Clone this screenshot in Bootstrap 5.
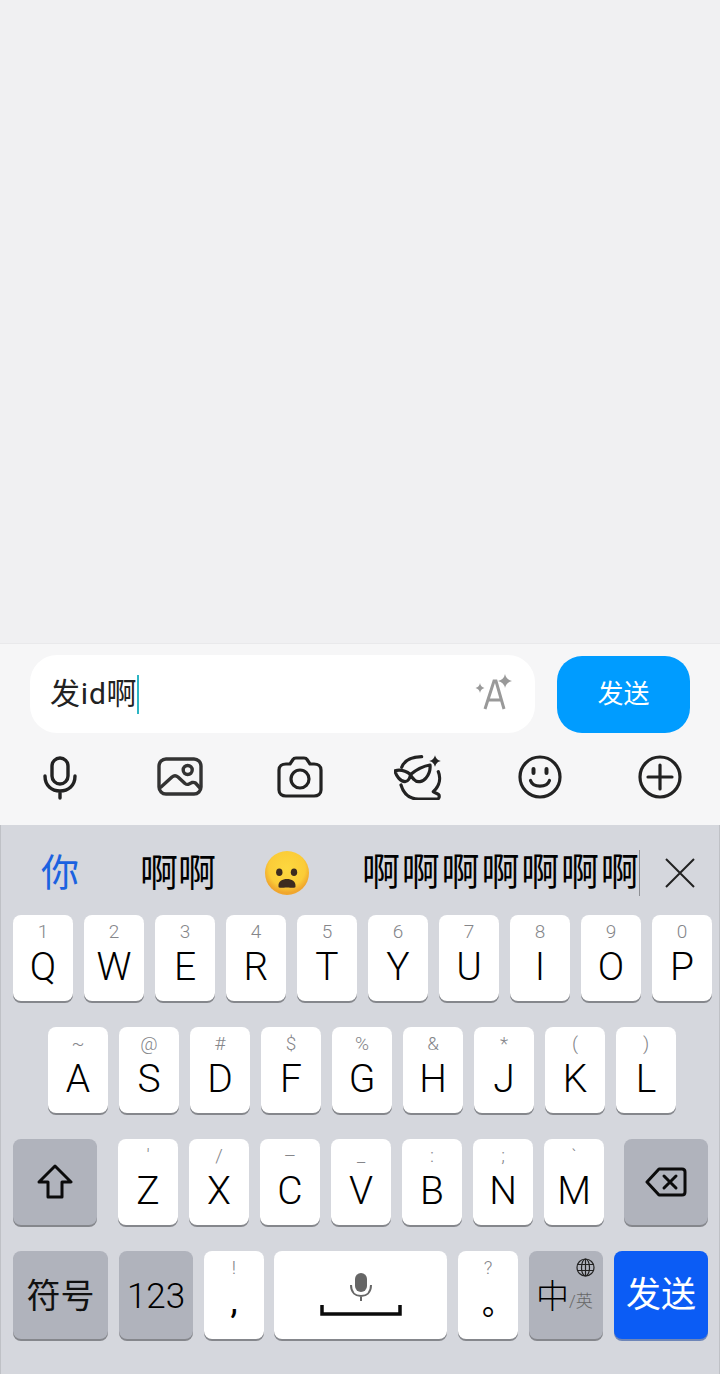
<!DOCTYPE html>
<html lang="zh-CN">
<head>
    <meta charset="UTF-8">
    <meta name="viewport" content="width=device-width, initial-scale=1.0">
    <title>发送消息</title>
    <!-- Bootstrap CSS -->
    <link href="https://cdn.jsdelivr.net/npm/bootstrap@5.3.0/dist/css/bootstrap.min.css" rel="stylesheet">
    <style>
        body {
            font-family: Roboto, "Noto Sans CJK SC", sans-serif;
            background: #f0f0f2;
            color: #111;
            overflow: hidden;
        }

        .chat-area { height: 643px; }

        /* input bar */
        .input-bar {
            height: 182px;
            background: #f6f6f7;
            border-top: 1px solid #e9e9eb;
        }
        .input-row { padding: 11px 30px 0; gap: 22px; }
        .msg-box {
            width: 505px;
            height: 78px;
            background: #fff;
            border-radius: 27px;
            padding: 0 21px 0 20px;
        }
        .msg-text { font-size: 30px; line-height: 40px; color: #222; letter-spacing: .8px; }
        .msg-caret { width: 2px; height: 39px; background: #2cb5c4; }
        .send-small {
            width: 133px;
            height: 77px;
            margin-top: 1px;
            background: #009cff;
            border-radius: 25px;
            color: #fff;
            font-size: 26px;
        }
        .tool-row { height: 88px; }
        .tool-row svg { display: block; margin: 0 auto; }

        /* keyboard */
        .keyboard {
            height: 549px;
            background: #d5d7dd;
            border-left: 1px solid #bfc1c6;
            border-right: 1px solid #bfc1c6;
        }
        .cand-row { height: 90px; padding-top: 6px; }
        .cand { font-size: 38px; line-height: 44px; color: #000; white-space: nowrap; }
        .cand-first { color: #1b62e0; width: 139px; padding-left: 40px; }
        .cand-two { width: 124px; }
        .cand-emoji { width: 98px; }
        .cand-long { width: 278px; letter-spacing: 1.8px; border-right: 1px solid #8d8f94; height: 46px; }
        .cand-close { margin-left: 24px; }

        .key-row { gap: 11px; margin-bottom: 26px; }
        .row-a { padding-left: 12px; }
        .row-b { padding-left: 47px; }
        .key-cap {
            width: 60px;
            height: 86px;
            background: #fff;
            border-radius: 8px;
            box-shadow: 0 2px 0 #85878c;
            text-align: center;
            padding-top: 6px;
            flex: none;
        }
        .key-hint { font-size: 19px; font-weight: 300; line-height: 21px; height: 21px; color: #85868a; }
        .key-main { font-size: 39px; font-weight: 300; line-height: 46px; margin-top: 2px; color: #000; }
        .key-punct { margin-top: 0; font-size: 36px; font-weight: 400; }
        .key-dot { font-family: "Noto Sans CJK TC", sans-serif; font-size: 32px; font-weight: 400; margin-top: 9px; }
        .key-dark { background: #b0b3bc; }
        .key-mid { padding: 0; }
        .key-wide { width: 84px; }
        .gap-after { margin-right: 10px; }
        .gap-before { margin-left: 9px; }
        .key-bottom { height: 88px; }
        .key-sym { width: 95px; font-size: 34px; padding-top: 3px; }
        .key-num { width: 74px; font-size: 35px; font-weight: 300; color: #000; padding-top: 4px; }
        .key-space { width: 173px; margin-left: -1px; }
        .key-lang { width: 74px; position: relative; padding-top: 2px; }
        .lang-big { font-size: 33px; color: #000; line-height: 1; font-weight: 300; margin-left: -3px; }
        .lang-small { font-size: 17px; color: #666; margin-top: 11px; font-weight: 300; }
        .lang-globe { position: absolute; top: 7px; right: 8px; }
        .key-go { width: 94px; background: #0b5cf5; color: #fff; font-size: 35px; padding-top: 3px; box-shadow: 0 2px 0 #6f86b8; }
    </style>
</head>
<body>

    <div class="chat-area"></div>

    <!-- Input bar -->
    <div class="input-bar">
        <div class="d-flex input-row">
            <div class="msg-box d-flex align-items-center">
                <span class="msg-text">发id啊</span>
                <span class="msg-caret"></span>
                <svg class="ms-auto" width="40" height="40" viewBox="0 0 40 40" fill="none">
                    <path d="M11 35 L20 7 L22 7 L30 35 M14 26 H27" stroke="#999" stroke-width="3"/>
                    <path d="M31 0 Q32 5.500 38 7 Q32 8.500 31 14 Q30 8.500 24 7 Q30 5.500 31 0Z" fill="#999"/>
                    <path d="M6 9 Q6.600 13 10.500 14 Q6.600 15 6 19 Q5.400 15 1.500 14 Q5.400 13 6 9Z" fill="#999"/>
                </svg>
            </div>
            <button type="button" class="btn send-small border-0 p-0">发送</button>
        </div>
        <div class="row g-0 tool-row align-items-center">
            <div class="col-2">
                <svg width="36" height="46" viewBox="0 0 36 46" fill="none" stroke="#222" stroke-width="3.400" stroke-linecap="round">
                    <rect x="10" y="4" width="16" height="26" rx="8"/>
                    <path d="M3 22 C3 32 10 37 18 37 C26 37 33 32 33 22 M18 37 V44"/>
                </svg>
            </div>
            <div class="col-2">
                <svg width="46" height="40" viewBox="0 0 46 40" fill="none" stroke="#333" stroke-width="3.400" stroke-linejoin="round" stroke-linecap="round">
                    <rect x="2" y="2" width="42" height="35" rx="7"/>
                    <circle cx="30.700" cy="13" r="4.500"/>
                    <path d="M4 30 L15 20 Q18 17.500 21 20 L28 26.500 Q30 28 32 27 L35 25.500 Q37 25 38.500 26 L43 31"/>
                </svg>
            </div>
            <div class="col-2">
                <svg width="46" height="42" viewBox="0 0 46 42" fill="none" stroke="#222" stroke-width="3.200" stroke-linejoin="round">
                    <path d="M9 8 H13 L16 3.500 C16.500 2.500 17.500 2 19 2 H27 C28.500 2 29.500 2.500 30 3.500 L33 8 H37 C41 8 44 10 44 14 V34 C44 38 41 40 37 40 H9 C5 40 2 38 2 34 V14 C2 10 5 8 9 8Z"/>
                    <circle cx="23" cy="23" r="9"/>
                </svg>
            </div>
            <div class="col-2">
                <svg width="52" height="46" viewBox="-2 -1 52 46" fill="none" stroke="#222" stroke-width="3.200" stroke-linecap="round" stroke-linejoin="round">
                    <path d="M5.700 12.300 C8 6 15 2 25.700 1.700"/>
                    <path d="M42.300 16.700 C44.500 22 44.500 30 37.300 36.700 C39 38 42.500 39 43 40 C43.500 42 43 44 41 44 L22.300 44 C14 44 8 40 5 30"/>
                    <path d="M-1 15.700 C4 14.500 10 16 14.500 19.500 C20 15 27 11 34 10 C34.500 15 33.500 19 30 23 C27 27 21 28 18 24.500 C16.500 23 15 21 14.500 19.500 C14 23 12 26.500 9 26.700 C4.500 26.500 0 21 -1 15.700Z"/>
                    <path d="M39 0.200 Q40 5 44.800 6 Q40 7 39 11.800 Q38 7 33.200 6 Q38 5 39 0.200Z" fill="#222" stroke="none"/>
                </svg>
            </div>
            <div class="col-2">
                <svg width="44" height="44" viewBox="0 0 44 44" fill="none" stroke="#222" stroke-width="3.200" stroke-linecap="round">
                    <circle cx="22" cy="22" r="20"/>
                    <path d="M12.500 25.500 C15 33 29 33 31.500 25.500"/>
                    <path d="M15.500 14 V18 M28.500 14 V18" stroke-width="4"/>
                </svg>
            </div>
            <div class="col-2">
                <svg width="44" height="44" viewBox="0 0 44 44" fill="none" stroke="#222" stroke-width="3.200" stroke-linecap="round">
                    <circle cx="22" cy="22" r="20"/>
                    <path d="M22 10 V34 M10 22 H34"/>
                </svg>
            </div>
        </div>
    </div>

    <!-- Keyboard -->
    <div class="keyboard">
        <div class="cand-row d-flex align-items-center">
            <span class="cand cand-first">你</span>
            <span class="cand cand-two">啊啊</span>
            <span class="cand-emoji">
                <svg width="48" height="46" viewBox="0 0 48 46">
                    <defs>
                        <radialGradient id="faceFill" cx="50%" cy="40%" r="55%">
                            <stop offset="0" stop-color="#fdd83f"/>
                            <stop offset=".75" stop-color="#fbcc38"/>
                            <stop offset="1" stop-color="#f0a62d"/>
                        </radialGradient>
                    </defs>
                    <circle cx="23" cy="23" r="22" fill="url(#faceFill)"/>
                    <ellipse cx="15.300" cy="22.300" rx="3.200" ry="3.800" fill="#3d2b1f"/>
                    <ellipse cx="30" cy="22.300" rx="3.200" ry="3.800" fill="#3d2b1f"/>
                    <path d="M14.500 36.500 C14 31 18.500 29 23 29 C27.500 29 32 31 31.500 36.500 C31.500 38.500 28 37.800 23 37.500 C18 37.800 14.500 38.500 14.500 36.500Z" fill="#3d2b1f"/>
                </svg>
            </span>
            <span class="cand cand-long">啊啊啊啊啊啊啊</span>
            <svg class="cand-close" width="32" height="32" viewBox="0 0 32 32" stroke="#222" stroke-width="2" fill="none">
                <path d="M2 2 L30 30 M30 2 L2 30"/>
            </svg>
        </div>

        <div class="d-flex key-row row-a">
            <div class="key-cap"><div class="key-hint">1</div><div class="key-main">Q</div></div>
            <div class="key-cap"><div class="key-hint">2</div><div class="key-main">W</div></div>
            <div class="key-cap"><div class="key-hint">3</div><div class="key-main">E</div></div>
            <div class="key-cap"><div class="key-hint">4</div><div class="key-main">R</div></div>
            <div class="key-cap"><div class="key-hint">5</div><div class="key-main">T</div></div>
            <div class="key-cap"><div class="key-hint">6</div><div class="key-main">Y</div></div>
            <div class="key-cap"><div class="key-hint">7</div><div class="key-main">U</div></div>
            <div class="key-cap"><div class="key-hint">8</div><div class="key-main">I</div></div>
            <div class="key-cap"><div class="key-hint">9</div><div class="key-main">O</div></div>
            <div class="key-cap"><div class="key-hint">0</div><div class="key-main">P</div></div>
        </div>

        <div class="d-flex key-row row-b">
            <div class="key-cap"><div class="key-hint">~</div><div class="key-main">A</div></div>
            <div class="key-cap"><div class="key-hint">@</div><div class="key-main">S</div></div>
            <div class="key-cap"><div class="key-hint">#</div><div class="key-main">D</div></div>
            <div class="key-cap"><div class="key-hint">$</div><div class="key-main">F</div></div>
            <div class="key-cap"><div class="key-hint">%</div><div class="key-main">G</div></div>
            <div class="key-cap"><div class="key-hint">&amp;</div><div class="key-main">H</div></div>
            <div class="key-cap"><div class="key-hint">*</div><div class="key-main">J</div></div>
            <div class="key-cap"><div class="key-hint">(</div><div class="key-main">K</div></div>
            <div class="key-cap"><div class="key-hint">)</div><div class="key-main">L</div></div>
        </div>

        <div class="d-flex key-row row-a">
            <div class="key-cap key-dark key-mid key-wide gap-after d-flex align-items-center justify-content-center">
                <svg width="36" height="36" viewBox="0 0 36 36" fill="none" stroke="#0b0b0b" stroke-width="3" stroke-linejoin="round">
                    <path d="M18 2 L34 18 H25 V33 H11 V18 H2Z"/>
                </svg>
            </div>
            <div class="key-cap"><div class="key-hint">'</div><div class="key-main">Z</div></div>
            <div class="key-cap"><div class="key-hint">/</div><div class="key-main">X</div></div>
            <div class="key-cap"><div class="key-hint">–</div><div class="key-main">C</div></div>
            <div class="key-cap"><div class="key-hint">_</div><div class="key-main">V</div></div>
            <div class="key-cap"><div class="key-hint">:</div><div class="key-main">B</div></div>
            <div class="key-cap"><div class="key-hint">;</div><div class="key-main">N</div></div>
            <div class="key-cap"><div class="key-hint">`</div><div class="key-main">M</div></div>
            <div class="key-cap key-dark key-mid key-wide gap-before d-flex align-items-center justify-content-center">
                <svg width="42" height="30" viewBox="0 0 42 30" fill="none" stroke="#0b0b0b" stroke-width="3" stroke-linejoin="round" stroke-linecap="round">
                    <path d="M14 2 H37 C39 2 40 3 40 5 V25 C40 27 39 28 37 28 H14 L2 15Z"/>
                    <path d="M19 9 L31 21 M31 9 L19 21"/>
                </svg>
            </div>
        </div>

        <div class="d-flex key-row row-a mb-0">
            <div class="key-cap key-bottom key-dark key-mid key-sym d-flex align-items-center justify-content-center">符号</div>
            <div class="key-cap key-bottom key-dark key-mid key-num d-flex align-items-center justify-content-center">123</div>
            <div class="key-cap key-bottom"><div class="key-hint">!</div><div class="key-main key-punct">,</div></div>
            <div class="key-cap key-bottom key-space key-mid d-flex align-items-center justify-content-center">
                <svg width="82" height="44" viewBox="0 0 82 44" fill="none">
                    <rect x="35" y="0" width="12" height="19" rx="6" fill="#666"/>
                    <path d="M31 12 C31 20 36 23 41 23 C46 23 51 20 51 12 M41 23 V28" stroke="#666" stroke-width="2"/>
                    <path d="M2 32 V41 H80 V32" stroke="#0b0b0b" stroke-width="3.500"/>
                </svg>
            </div>
            <div class="key-cap key-bottom"><div class="key-hint">?</div><div class="key-main key-dot">。</div></div>
            <div class="key-cap key-bottom key-dark key-mid key-lang d-flex align-items-center justify-content-center">
                <span class="lang-big">中</span><span class="lang-small">/英</span>
                <svg class="lang-globe" width="19" height="19" viewBox="0 0 19 19" fill="none" stroke="#222" stroke-width="1.200">
                    <circle cx="9.500" cy="9.500" r="8.500"/>
                    <ellipse cx="9.500" cy="9.500" rx="4" ry="8.500"/>
                    <path d="M9.500 1 V18 M1.500 6.500 H17.500 M1.500 12.500 H17.500"/>
                </svg>
            </div>
            <div class="key-cap key-bottom key-mid key-go d-flex align-items-center justify-content-center">发送</div>
        </div>
    </div>

<!-- Bootstrap JS -->
<script src="https://cdn.jsdelivr.net/npm/bootstrap@5.3.0/dist/js/bootstrap.bundle.min.js"></script>
</body>
</html>
